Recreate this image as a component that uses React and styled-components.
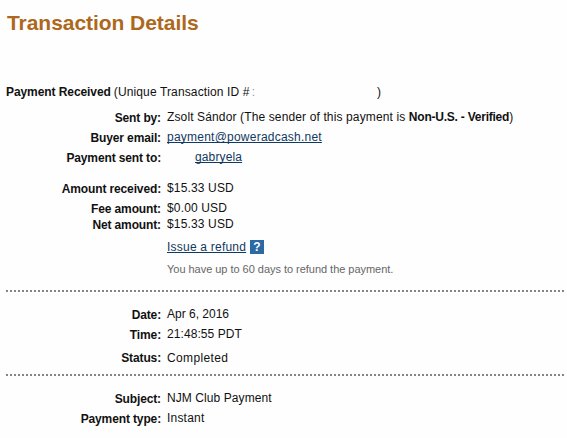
import React from "react";
import styled, { createGlobalStyle } from "styled-components";

const App = () => {
  return (
    <>
      <GlobalStyle />
      <Page>
        <Title>Transaction Details</Title>
        <Summary>
          <b>Payment Received</b>
          <Text $spacing={0.13}>(Unique Transaction ID #</Text>
          <Faint>:</Faint>
          <Closing>)</Closing>
        </Summary>

        <Row $gap={9}>
          <Label>Sent by:</Label>
          <Value $spacing={0.13}>
            Zsolt Sándor (The sender of this payment is{" "}
            <b>Non-U.S. - Verified</b>)
          </Value>
        </Row>
        <Row $gap={4}>
          <Label>Buyer email:</Label>
          <Value $spacing={0.23}>
            <Link href="#">payment@poweradcash.net</Link>
          </Value>
        </Row>
        <Row $gap={4}>
          <Label>Payment sent to:</Label>
          <Value $indent={28} $spacing={0.13}>
            <Link href="#">gabryela</Link>
          </Value>
        </Row>
        <Row $gap={15}>
          <Label>Amount received:</Label>
          <Value $spacing={0.15}>$15.33 USD</Value>
        </Row>
        <Row $gap={4}>
          <Label>Fee amount:</Label>
          <Value $spacing={0.15}>$0.00 USD</Value>
        </Row>
        <Row>
          <Label>Net amount:</Label>
          <Value $spacing={0.15}>$15.33 USD</Value>
        </Row>
        <Row $gap={7}>
          <Label />
          <Refund>
            <Link href="#">Issue a refund</Link>
            <Help>?</Help>
          </Refund>
        </Row>
        <Row $gap={6}>
          <Label />
          <Note>You have up to 60 days to refund the payment.</Note>
        </Row>

        <Divider $gap={13} />

        <Row $gap={14}>
          <Label>Date:</Label>
          <Value>Apr 6, 2016</Value>
        </Row>
        <Row $gap={4}>
          <Label>Time:</Label>
          <Value $spacing={0.08}>21:48:55 PDT</Value>
        </Row>
        <Row $gap={8}>
          <Label $flush>Status:</Label>
          <Value $spacing={0.35}>Completed</Value>
        </Row>

        <Divider $gap={8} />

        <Row $gap={14}>
          <Label>Subject:</Label>
          <Value $spacing={0.08}>NJM Club Payment</Value>
        </Row>
        <Row $gap={4}>
          <Label>Payment type:</Label>
          <Value $spacing={0.2}>Instant</Value>
        </Row>
      </Page>
    </>
  );
};

export default App;

const GlobalStyle = createGlobalStyle`
  body {
    margin: 0;
    background: #fefefe;
    overflow: hidden;
  }
`;
const Page = styled.div`
  box-sizing: border-box;
  width: 567px;
  height: 438px;
  padding: 11px 2px 0 6px;
  overflow: hidden;
  color: #111;
  font-family: "Liberation Sans", Arial, sans-serif;
  font-size: 12px;
  line-height: 16px;
`;
const Title = styled.h1`
  margin: 0;
  padding-left: 1px;
  color: #ad681c;
  font-size: 21px;
  line-height: 24px;
  font-weight: bold;
  letter-spacing: -0.05px;
`;
const Text = styled.span`
  letter-spacing: ${({ $spacing }) => $spacing || 0}px;
`;
const Summary = styled.div`
  display: flex;
  margin-top: 49px;
  white-space: pre;

  b {
    margin-right: 3px;
    letter-spacing: -0.08px;
  }
`;
const Faint = styled.span`
  margin-left: 2px;
  color: #999;
`;
const Closing = styled.span`
  margin-left: 122px;
`;
const Row = styled.div`
  display: flex;
  height: 16px;
  margin-top: ${({ $gap }) => $gap || 0}px;
  white-space: nowrap;
`;
const Label = styled.div`
  box-sizing: border-box;
  flex: none;
  width: 155px;
  margin-right: 6px;
  padding-top: ${({ $flush }) => ($flush ? 0 : 1)}px;
  text-align: right;
  font-weight: bold;
  letter-spacing: -0.13px;
`;
const Value = styled.div`
  padding-left: ${({ $indent }) => $indent || 0}px;
  letter-spacing: ${({ $spacing }) => $spacing || 0}px;

  b {
    letter-spacing: -0.23px;
  }
`;
const Link = styled.a`
  color: #12395f;
  text-decoration: underline;
  text-decoration-skip-ink: none;
`;
const Refund = styled.div`
  display: flex;
  align-items: center;
  gap: 4px;
  letter-spacing: 0.22px;
`;
const Help = styled.span`
  width: 14px;
  height: 14px;
  background: #2a6aa5;
  color: #fff;
  font-size: 12px;
  line-height: 14px;
  font-weight: bold;
  text-align: center;
`;
const Note = styled.div`
  color: #666;
  font-size: 11px;
  letter-spacing: -0.03px;
`;
const Divider = styled.div`
  height: 2px;
  margin-top: ${({ $gap }) => $gap}px;
  background: repeating-linear-gradient(
    to right,
    #858585 0 2px,
    transparent 2px 4px
  );
`;
